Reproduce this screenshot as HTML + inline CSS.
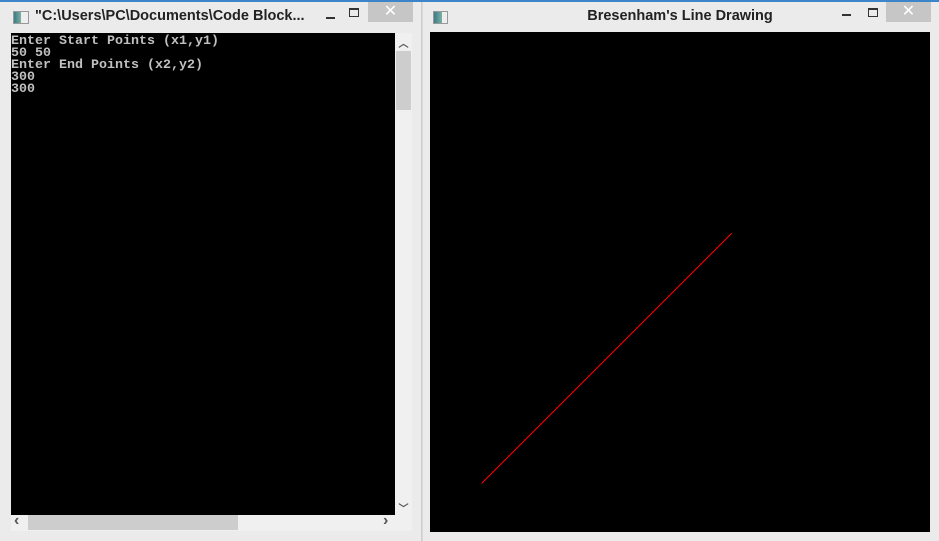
<!DOCTYPE html>
<html><head><style>
body{margin:0;width:939px;height:541px;overflow:hidden;background:#ebebeb;position:relative;font-family:"Liberation Sans",sans-serif}
.a{position:absolute}
.t{font-weight:bold;font-size:14.5px;color:#222}
.con{font-family:"Liberation Mono",monospace;font-size:13.33px;line-height:12px;color:#c0c0c0;white-space:pre;font-weight:bold}
</style></head><body>
<div class="a" style="left:0;top:0;width:939px;height:2px;background:#3a86c8"></div>
<div class="a" style="left:0;top:2px;width:421px;height:539px;background:#ebebeb;border-right:1px solid #cfcfcf"></div>
<div class="a" style="left:422px;top:2px;width:517px;height:539px;background:#ebebeb;border-left:1px solid #d8d8d8"></div>
<div class="a" style="left:13px;top:11px;width:14px;height:11px;border:1px solid #999;background:linear-gradient(90deg,#3b7a8a,#7ab0a0 50%,#eee 50%)"></div>
<div class="a t" style="left:35px;top:8px">"C:\Users\PC\Documents\Code Block...</div>
<div class="a" style="left:326px;top:17px;width:9px;height:2px;background:#333"></div>
<div class="a" style="left:349px;top:8px;width:8px;height:6px;border:1px solid #333;border-top-width:2px"></div>
<div class="a" style="left:368px;top:2px;width:45px;height:20px;background:#c6c6c6;color:#fff;text-align:center;font-size:16px;line-height:20px">✕</div>
<div class="a" style="left:11px;top:33px;width:384px;height:482px;background:#000"></div>
<div class="a con" style="left:11px;top:36px">Enter Start Points (x1,y1)
50 50
Enter End Points (x2,y2)
300
300</div>
<div class="a" style="left:395px;top:33px;width:17px;height:482px;background:#f0f0f0"></div>
<div class="a" style="left:396px;top:51px;width:15px;height:59px;background:#cdcdcd"></div>
<div class="a" style="left:395px;top:35px;width:17px;text-align:center;font-size:10px;color:#555;font-weight:bold">︿</div>
<div class="a" style="left:395px;top:500px;width:17px;text-align:center;font-size:10px;color:#555;font-weight:bold">﹀</div>
<div class="a" style="left:11px;top:515px;width:401px;height:16px;background:#f0f0f0"></div>
<div class="a" style="left:28px;top:515px;width:210px;height:15px;background:#cdcdcd"></div>
<div class="a" style="left:14px;top:512px;font-size:16px;color:#555;font-weight:bold">‹</div>
<div class="a" style="left:383px;top:512px;font-size:16px;color:#555;font-weight:bold">›</div>
<div class="a" style="left:433px;top:11px;width:13px;height:11px;border:1px solid #999;background:linear-gradient(90deg,#3b7a8a,#7ab0a0 60%,#eee 60%)"></div>
<div class="a t" style="left:430px;top:8px;width:500px;text-align:center">Bresenham's Line Drawing</div>
<div class="a" style="left:842px;top:14px;width:9px;height:2px;background:#333"></div>
<div class="a" style="left:868px;top:8px;width:8px;height:6px;border:1px solid #333;border-top-width:2px"></div>
<div class="a" style="left:886px;top:2px;width:45px;height:20px;background:#c6c6c6;color:#fff;text-align:center;font-size:16px;line-height:20px">✕</div>
<div class="a" style="left:430px;top:32px;width:500px;height:500px;background:#000"></div>
<svg class="a" style="left:0;top:0" width="939" height="541"><line x1="481.5" y1="483.5" x2="731.5" y2="233.5" stroke="#ff0000" stroke-width="1.2" shape-rendering="crispEdges"/></svg>
</body></html>
